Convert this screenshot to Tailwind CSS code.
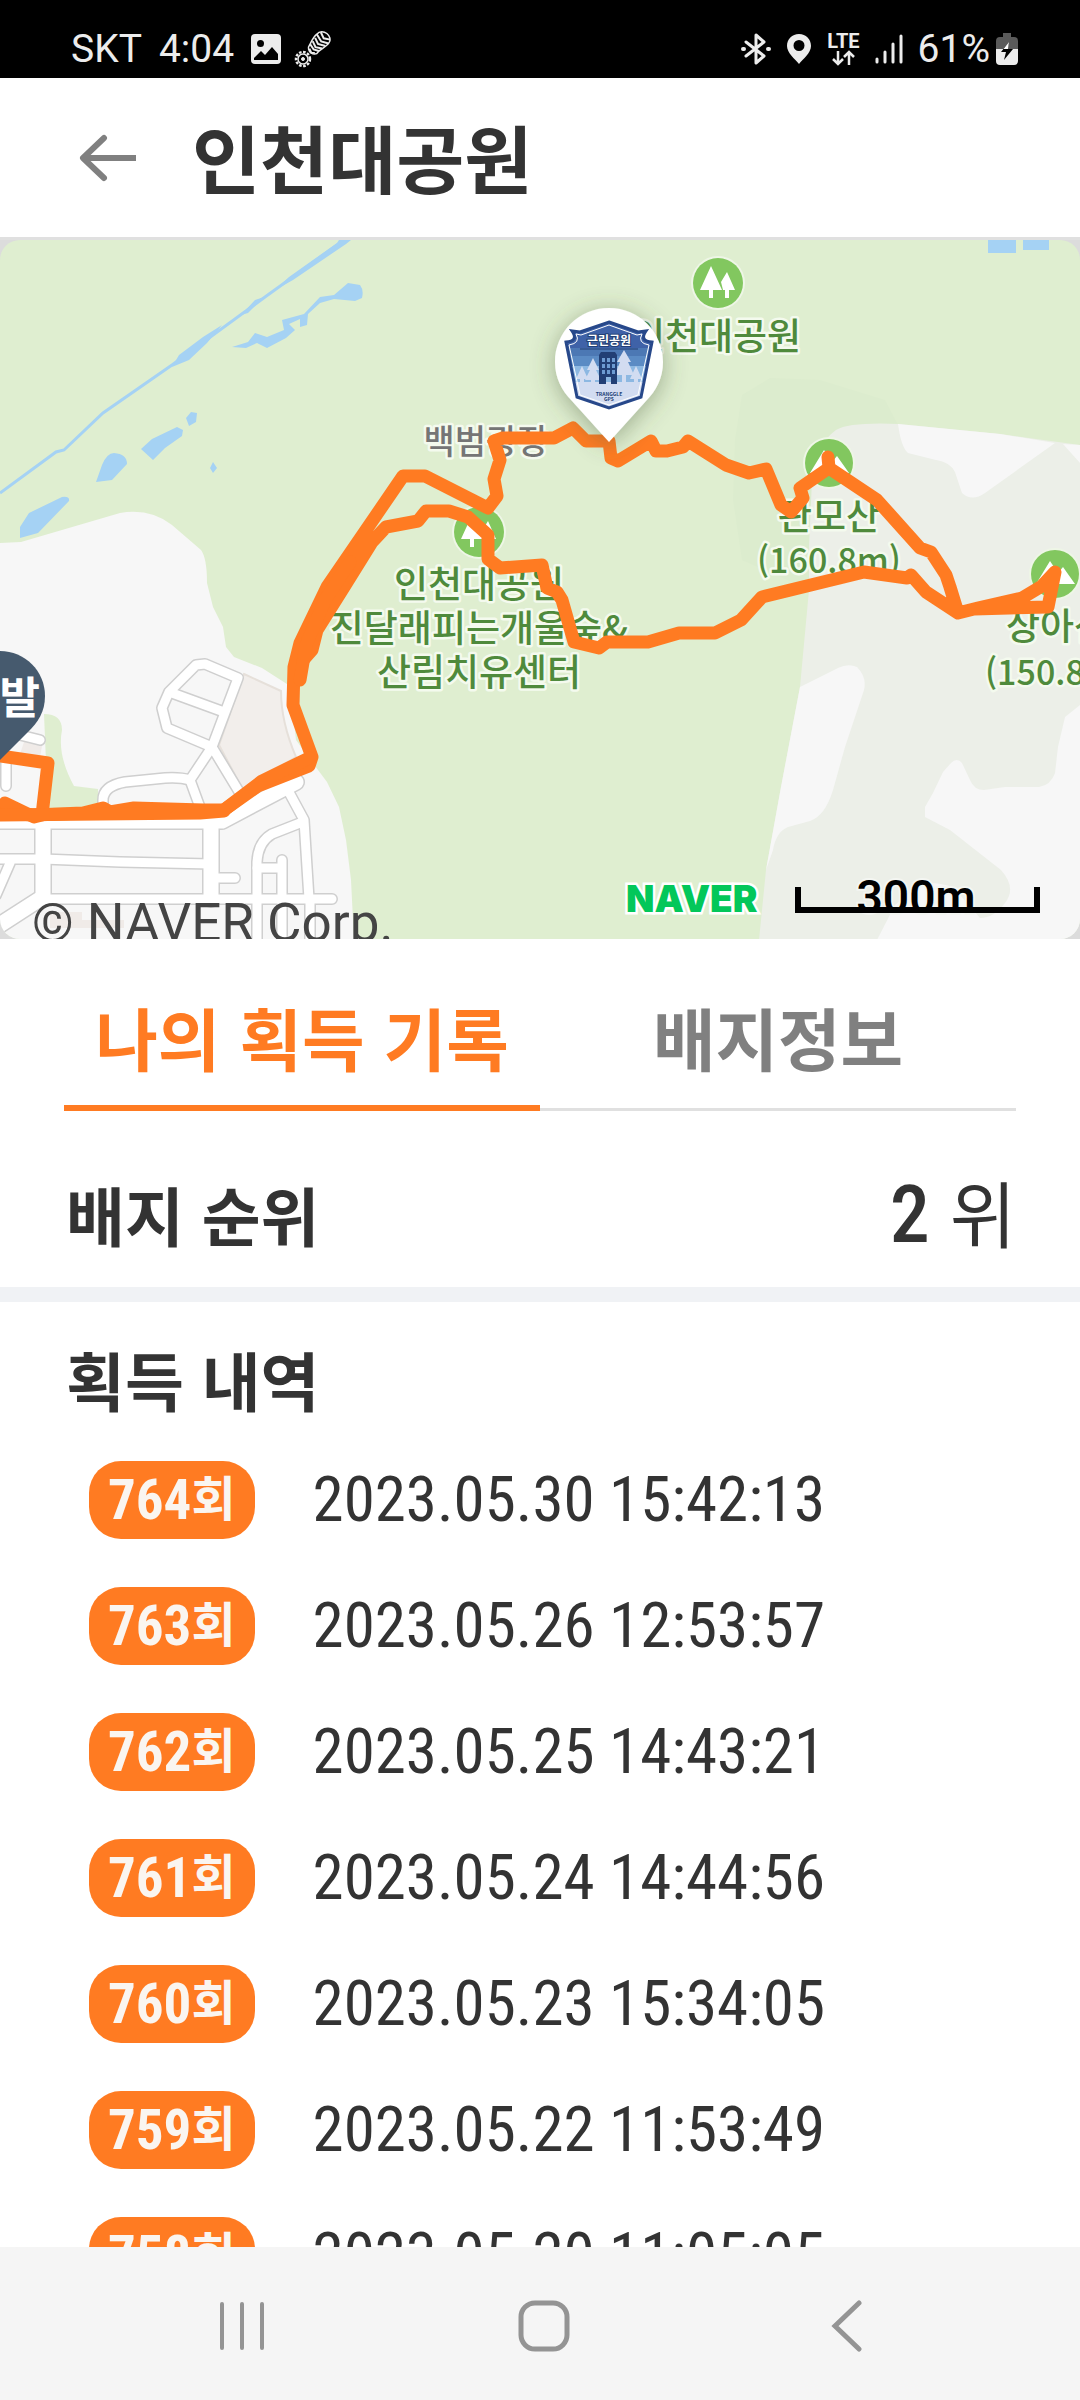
<!DOCTYPE html>
<html lang="ko">
<head>
  <meta charset="UTF-8" />
  <meta name="viewport" content="width=device-width, initial-scale=1.0" />
  <title>인천대공원</title>
  <script src="https://cdn.jsdelivr.net/npm/@tailwindcss/browser@4"></script>
</head>
<body class="h-screen flex flex-col overflow-hidden bg-white text-[#333333] font-['Noto_Sans_CJK_KR',sans-serif]">

  <!-- Status bar -->
  <div class="h-[78px] shrink-0 bg-black text-[#ececec] flex items-center justify-between pt-5 pl-[71px] pr-[62px] font-['Roboto',sans-serif] text-[39px]">
    <div class="flex items-center gap-[17px]">
      <span>SKT</span>
      <span>4:04</span>
      <svg class="size-[30px]" viewBox="0 0 30 30">
        <rect width="30" height="30" rx="4" fill="#ececec" />
        <circle cx="9.500" cy="9.500" r="3.500" fill="#000" />
        <path d="M3 24 L10 17 L14 21 L21 13 L27 20 V26 H3 Z" fill="#000" />
      </svg>
      <svg class="w-[38px] h-[38px] -ml-1" viewBox="0 0 38 38" fill="none" stroke="#ececec">
        <circle cx="9" cy="29" r="7" stroke-width="2.500" stroke-dasharray="2.600 1.500" />
        <circle cx="9" cy="29" r="5" stroke-width="1.500" />
        <circle cx="9" cy="29" r="1.500" fill="#ececec" />
        <g transform="rotate(38 24 14)">
          <path d="M17 7 C17 -2 32 -2 32 7 C32 13 29 16 29 20 C30 27 18 27 18 20 C17 15 16 11 17 7 Z" stroke-width="1.500" />
          <path d="M19 3 L25 6 L31 3 M17 7 L25 10 L32 7 M18 11 L24 14 L31 11 M18 15 L24 18 L30 15 M18 19 L24 21 L29 19 M20 23 L24 25 L27 23" stroke-width="2" />
        </g>
      </svg>
    </div>
    <div class="flex items-center gap-[15px]">
      <svg class="w-[30px] h-8" viewBox="0 0 30 32" fill="none" stroke="#ececec" stroke-width="3" stroke-linejoin="round" stroke-linecap="round">
        <path d="M5 9 L23 23 L15 30 V2 L23 9 L5 23" />
        <path d="M2 16 h1 M27 16 h1" stroke-width="4" />
      </svg>
      <svg class="w-[26px] h-8" viewBox="0 0 26 32">
        <path fill="#ececec" fill-rule="evenodd" d="M13 1 C6 1 1 6 1 13 C1 20 9 26 13 31 C17 26 25 20 25 13 C25 6 20 1 13 1 Z M13 7 a5.500 5.500 0 1 1 0 11 a5.500 5.500 0 1 1 0 -11 Z" />
      </svg>
      <div class="flex flex-col items-center">
        <span class="text-[20px] leading-[18px] font-bold">LTE</span>
        <svg class="w-6 h-4" viewBox="0 0 24 16" fill="none" stroke="#ececec" stroke-width="2.500">
          <path d="M7 1 V14 M2 9 L7 14 L12 9 M18 15 V2 M13 7 L18 2 L23 7" />
        </svg>
      </div>
      <svg class="w-7 h-8" viewBox="0 0 28 32" stroke="#ececec" stroke-width="3" stroke-linecap="round">
        <path d="M2 26 V29 M10 19 V29 M18 11 V29 M26 3 V29" />
      </svg>
      <div class="flex items-center gap-[6px]">
        <span>61%</span>
        <svg class="w-[22px] h-8" viewBox="0 0 22 32">
          <path d="M7 0 H15 V4 H18 Q22 4 22 8 V18 H0 V8 Q0 4 4 4 H7 Z" fill="#5a5a5a" />
          <path d="M0 16 H22 V28 Q22 32 18 32 H4 Q0 32 0 28 Z" fill="#ececec" />
          <path d="M13 9 L5 19 H10 L8 27 L17 16 H12 Z" fill="#000" />
          <path d="M13 9 L7.500 16 H12 Z" fill="#fff" />
        </svg>
      </div>
    </div>
  </div>

  <!-- Title bar -->
  <header class="h-[162px] shrink-0 border-b-3 border-[#e0e0e0] flex items-center gap-[54px] pl-[78px]">
    <button aria-label="뒤로">
      <svg class="w-[60px] h-12" viewBox="0 0 60 48" fill="none" stroke="#808080" stroke-width="6" stroke-linecap="round" stroke-linejoin="round">
        <path d="M26 4 L5 24 L26 44" />
        <path d="M6 24 H58" stroke-linecap="butt" />
      </svg>
    </button>
    <h1 class="pb-1 text-[74px] leading-[96px] font-semibold">인천대공원</h1>
  </header>

  <!-- Map -->
  <div class="h-[699px] shrink-0 bg-[#dcdcdc]">
    <svg class="w-full h-full" viewBox="0 240 1080 699" preserveAspectRatio="xMidYMid slice">
      <defs>
        <clipPath id="mapClip"><rect x="0" y="240" width="1080" height="699" rx="20" /></clipPath>
        <filter id="pinShadow" x="-50%" y="-50%" width="200%" height="200%">
          <feDropShadow dx="0" dy="4" stdDeviation="12" flood-color="#4b5b3c" flood-opacity="0.450" />
        </filter>
        <g id="roadsNarrow">
          <path d="M205 664 L238 678 L212 747 L167 728 L162 708 L169 692 L196 665 Z" />
          <path d="M172 693 L224 712 M212 747 L190 780 L201 810 M212 747 L241 795" />
          <path d="M190 780 Q180 777 165 778 L125 782 Q103 786 103 800 V812" />
          <path d="M284 783 L304 820 L309 899 M300 823 L272 834 Q258 842 257 862 V945" />
          <path d="M257 868 H282 M282 860 V945 M310 899 V945 M213 878 H235" />
          <path d="M50 899 L332 899 M0 859 H43 L120 862 L211 864" />
          <path d="M20 735 L40 740 M6 760 V786 M10 863 L-4 895" />
        </g>
        <g id="roadsWide">
          <path d="M-5 821 L222 821 L296 782" />
          <path d="M43 821 V899 M211 821 V899 M-5 928 L43 897" />
        </g>
        <g id="peak">
          <circle r="26" fill="#eef6e6" />
          <circle r="24" fill="#82c75f" />
          <path d="M-19 10 L-5 -13 L3 -1 L8 -7 L20 10 Z" fill="#fff" />
        </g>
        <g id="trees">
          <circle r="27" fill="#eef6e6" />
          <circle r="25" fill="#82c75f" />
          <path d="M-7 -17 L4 7 H-5 V15 H-9 V7 H-18 Z" fill="#fff" />
          <path d="M9 -11 L17 7 H11 V15 H7 V7 H5 L3 -1 Z" fill="#fff" />
        </g>
      </defs>

      <g clip-path="url(#mapClip)">
        <rect y="240" width="1080" height="700" fill="#dfeed0" />

        <!-- Built-up and mountain areas -->
        <path fill="#dcecce" d="M742 560 L733 500 L735 440 L742 395 L770 378 L820 380 L885 400 L898 425 L850 440 L810 590 Z" />
        <path fill="#f7f7f7" d="M0 543 L21 542 L120 513 Q150 508 172 525 L201 550 Q207 558 207 583 L213 607 L223 627 L226 647 L234 657 L262 668 L290 686 L296 740 L312 762 L327 782 L339 807 L346 840 L351 880 L354 940 H0 Z" />
        <path fill="#dfeed0" d="M44 714 Q62 714 62 730 Q57 755 74 786 L98 789 V810 H48 Z" />
        <path fill="#ecefe8" d="M809 590 V547 L812 480 Q815 445 836 430 Q850 422 898 424 L1000 434 L1080 445 V940 H759 L766 870 L781 787 L800 687 Z" />
        <path fill="#f7f7f7" d="M898 424 L1000 434 L1055 443 L985 493 Q972 502 962 493 L955 472 Q950 462 936 460 L908 453 Q901 447 898 424 Z M1063 444 L1080 445 V463 Z" />
        <path fill="#f7f7f7" d="M800 687 L838 668 Q848 663 857 667 Q867 677 864 690 L845 747 L833 790 Q825 816 810 821 L788 827 Q776 832 773 850 L766 870 L781 787 Z" />
        <path fill="#f7f7f7" d="M1080 705 L1065 717 L1058 747 L1055 773 Q1051 785 1039 787 H1005 L984 790 Q974 790 970 780 L962 763 Q957 757 951 763 L943 772 L933 793 L925 807 V817 L950 830 L1001 870 Q1017 888 1005 903 Q994 918 980 918 L953 887 Q930 880 919 885 L895 905 L877 940 H1080 Z" />
        <path fill="#f2eeeb" stroke="#e6e0da" stroke-width="2" d="M244 674 L281 691 Q281 722 296 757 L258 780 L243 790 L219 745 Z" />
        <path fill="#f0ebe8" d="M24 742 L42 746 L40 757 L20 754 Z M50 912 H82 V920 H124 V928 H50 Z" />

        <!-- Water -->
        <g fill="#a5d2f4">
          <path d="M0 493 L56 452 L64 450 L103 413 L172 365 L265 297 L344 240" fill="none" stroke="#a5d2f4" stroke-width="3" />
          <path d="M172 367 L179 355 L203 337 L222 325 L207 343 L189 360 Z M241 315 L255 300 L264 297 L248 313 Z M275 290 L289 277 L337 243 L339 240 H351 L346 244 L293 280 Z" />
          <path d="M232 347 L248 342 L255 333 L267 337 L284 330 L282 320 L304 314 L320 297 L334 295 L348 283 L360 285 Q364 290 362 298 L355 301 L334 299 L320 303 L308 314 L307 325 L300 327 V319 L289 324 L295 330 L286 338 L267 348 L257 343 L246 348 Z" />
          <path d="M186 418 L191 412 L197 413 L196 422 L189 426 Z M141 449 L152 439 L177 427 L183 430 L182 436 L165 448 L153 460 Z" />
          <path d="M96 482 L102 465 Q107 453 114 453 Q127 454 127 464 L112 480 Z M20 538 V527 L29 513 L62 497 Q70 496 69 501 L38 533 Z M213 462 L217 468 L213 473 L210 468 Z" />
          <path d="M988 240 H1016 V253 H988 Z M1023 240 H1049 V250 H1023 Z" />
        </g>

        <!-- Roads: casing below, surface above -->
        <g fill="none" stroke="#cfcfcf" stroke-linejoin="round" stroke-linecap="round">
          <use href="#roadsNarrow" stroke-width="12" />
          <use href="#roadsWide" stroke-width="18" />
        </g>
        <g fill="none" stroke="#ffffff" stroke-linejoin="round" stroke-linecap="round">
          <use href="#roadsNarrow" stroke-width="9" />
          <use href="#roadsWide" stroke-width="15" />
        </g>

        <!-- Places -->
        <use href="#trees" x="718" y="283" />
        <use href="#trees" x="479" y="532" />
        <use href="#peak" x="829" y="463" />
        <use href="#peak" x="1055" y="574" />
        <g class="text-[37px] font-medium" fill="#4f8a3c" stroke="#f4faee" stroke-width="5" stroke-linejoin="round" paint-order="stroke" text-anchor="middle">
          <text x="716" y="350">인천대공원</text>
          <text x="479" y="598">인천대공원</text>
          <text x="479" y="642">진달래피는개울숲&amp;</text>
          <text x="479" y="686">산림치유센터</text>
          <text x="829" y="530">관모산</text>
          <text x="829" y="573" class="text-[34px]">(160.8m)</text>
          <text x="1057" y="640">상아산</text>
          <text x="1057" y="685" class="text-[34px]">(150.8m)</text>
          <text x="486" y="454" class="text-[34px]" fill="#757575">백범광장</text>
        </g>

        <!-- Walked route -->
        <g fill="none" stroke="#ff7b22" stroke-width="13" stroke-linejoin="round" stroke-linecap="round">
          <path d="M0 813 L34 815 L83 813 L103 808 L110 812 L134 808 L203 810 L224 810 L258 786 L309 766 L312 757 L293 705 L294 667 L300 643 L327 587 L403 476 H425 L488 508 L497 496 L494 479 L500 460 L494 441 L503 438 H554 L573 428 L586 441 H609 L611 458 L618 461 L651 441 L656 451 H667 L683 447 L688 441 L726 465 L749 473 L766 469 L781 505 L791 512 L803 498 L800 488 L829 468 L828 457 L829 468 L877 500 L920 548 L931 552 L946 575 L950 587 L958 613 L978 608 L1022 598 L1042 586 L1055 572 L1048 607 L974 609 L958 613 L926 592 L911 575 L907 578 L864 572 L762 597 L741 620 L715 633 H679 L648 642 H607 L599 648 L574 642 L562 600 L557 592 L547 588 L542 565 L500 568 L488 559 V535 L468 517 L449 511 H426 L418 521 L386 527 L372 542 L344 587 L317 630 L312 650 L297 667" />
          <path d="M300 680 L306 645 L325 600 L350 562 M224 810 L262 781 L309 758 M0 756 L48 763 L42 815 L34 817 L5 803" />
          <path d="M0 815 L200 813 L224 811" />
        </g>

        <!-- Start pin -->
        <path d="M0 651 C25 651 45 671 45 696 C45 712 38 722 28 732 L0 760 L-28 732 C-38 722 -45 712 -45 696 C-45 671 -25 651 0 651 Z" fill="#465a6e" />
        <text x="40" y="714" text-anchor="end" class="text-[44px] font-bold" fill="#fff">출발</text>

        <!-- Badge pin -->
        <path filter="url(#pinShadow)" fill="#fff" d="M609 308 C639 308 663 332 663 362 C663 378 656 391 646 401 L609 442 L572 401 C562 391 555 378 555 362 C555 332 579 308 609 308 Z" />
        <clipPath id="badgeClip"><path d="M609 322 L638 332 L646 331 Q639 341 652 342 L641 397 L609 408 L577 397 L566 342 Q579 341 572 331 L580 332 Z" /></clipPath>
        <g clip-path="url(#badgeClip)">
          <rect x="560" y="320" width="100" height="90" fill="#3f62a8" />
          <rect x="560" y="348" width="100" height="12" fill="#4c78b4" />
          <rect x="560" y="356" width="100" height="12" fill="#5b8bc4" />
          <rect x="560" y="366" width="100" height="18" fill="#8db8e2" />
          <rect x="560" y="382" width="100" height="28" fill="#d2dcf1" />
          <path fill="#d2dcf1" d="M593 358 L599 370 H596 L601 380 H595 V383 H591 V380 H585 L590 370 H587 Z M624 350 L631 362 H628 L634 375 H626 V383 H622 V375 H615 L620 362 H617 Z M582 366 L588 379 H584 V383 H580 V379 H576 Z M636 366 L642 379 H638 V383 H634 V379 H630 Z" />
          <path fill="#223f75" d="M601 352 H615 L617 355 V384 H611 V377 H606 V384 H599 V355 Z" />
          <path fill="#6d9bd2" d="M602 358 h3 v4 h-3 Z M607 358 h3 v4 h-3 Z M612 358 h3 v4 h-3 Z M602 364 h3 v4 h-3 Z M607 364 h3 v4 h-3 Z M612 364 h3 v4 h-3 Z M602 370 h3 v4 h-3 Z M607 370 h3 v4 h-3 Z M612 370 h3 v4 h-3 Z" />
        </g>
        <path fill="none" stroke="#27488a" stroke-width="3" d="M609 322 L638 332 L646 331 Q639 341 652 342 L641 397 L609 408 L577 397 L566 342 Q579 341 572 331 L580 332 Z" />
        <path fill="none" stroke="#fff" d="M609 325 L637 335 L642 334 Q637 343 649 345 L638 395 L609 405 L580 395 L569 345 Q581 343 576 334 L581 335 Z" />
        <path stroke="#223f75" d="M580 349 H638" />
        <g text-anchor="middle" class="font-bold">
          <text x="609" y="345" class="text-[12px]" fill="#fff" stroke="#223f75" stroke-width="2" paint-order="stroke">근린공원</text>
          <text x="609" y="396" class="text-[5px]" fill="#223f75">TRANGGLE</text>
          <text x="609" y="401" class="text-[5px]" fill="#223f75">GPS</text>
        </g>

        <!-- Scale and credits -->
        <text x="626" y="912" class="font-['Inter',sans-serif] font-black text-[37px]" fill="#03c75a" stroke="#fff" stroke-width="5" paint-order="stroke">NAVER</text>
        <text x="916" y="913" text-anchor="middle" class="font-['Roboto',sans-serif] font-semibold text-[46px]" fill="#000" stroke="#f4f6f2" stroke-width="4" paint-order="stroke">300m</text>
        <path d="M798 887 V910 H1037 V887" fill="none" stroke="#000" stroke-width="6" />
      </g>
      <text x="32" y="941" class="font-['Roboto',sans-serif] text-[53px]" fill="#444">© NAVER Corp.</text>
    </svg>
  </div>

  <!-- Tabs -->
  <div role="tablist" class="grid grid-cols-2 items-end shrink-0 mx-16 pt-[38px] text-[68px] leading-[96px] font-semibold">
    <button role="tab" aria-selected="true" class="h-[134px] pb-2 border-b-6 border-[#ff7b22] text-[#ff7b22]">나의 획득 기록</button>
    <button role="tab" aria-selected="false" class="h-[134px] pb-3 border-b-3 border-[#e0e0e0] text-[#808080]">배지정보</button>
  </div>

  <!-- Rank -->
  <section class="h-[191px] shrink-0 border-b-15 border-[#f0f2f5] flex items-center justify-between pt-7 pl-[66px] pr-16">
    <h2 class="text-[64px] leading-[96px] font-semibold">배지 순위</h2>
    <p class="flex items-baseline gap-5 leading-[96px]">
      <span class="font-['Roboto_Condensed',sans-serif] font-medium text-[80px]">2</span>
      <span class="text-[72px]">위</span>
    </p>
  </section>

  <!-- History -->
  <section class="flex-1 min-h-0 overflow-hidden pt-7">
    <h2 class="pl-[66px] text-[64px] leading-[96px] font-semibold">획득 내역</h2>
    <ul id="history" class="mt-[35px] pl-[89px] flex flex-col gap-12"></ul>
  </section>

  <!-- Navigation bar -->
  <nav class="h-[153px] shrink-0 bg-[#f5f5f5] grid grid-cols-3 items-center justify-items-center pt-1 pl-[91px] pr-[82px]">
    <button aria-label="최근 앱">
      <svg class="size-[52px]" viewBox="0 0 52 52" stroke="#949494" stroke-width="4" stroke-linecap="round"><path d="M6 4 V48 M26 4 V48 M46 4 V48" /></svg>
    </button>
    <button aria-label="홈">
      <svg class="size-[52px]" viewBox="0 0 52 52" fill="none" stroke="#949494" stroke-width="5"><rect x="3" y="3" width="46" height="46" rx="14" /></svg>
    </button>
    <button aria-label="뒤로 가기">
      <svg class="size-[52px]" viewBox="0 0 52 52" fill="none" stroke="#949494" stroke-width="5" stroke-linecap="round"><path d="M38 3 L14 26 L38 49" /></svg>
    </button>
  </nav>

  <script>
    const records = [
      [764, '2023.05.30 15:42:13'],
      [763, '2023.05.26 12:53:57'],
      [762, '2023.05.25 14:43:21'],
      [761, '2023.05.24 14:44:56'],
      [760, '2023.05.23 15:34:05'],
      [759, '2023.05.22 11:53:49'],
      [758, '2023.05.20 11:05:05'],
    ];

    document.getElementById('history').innerHTML = records.map(([count, date]) => `
      <li class="flex items-center gap-[58px] h-[78px] font-['Roboto_Condensed','Noto_Sans_CJK_KR',sans-serif]">
        <span class="h-[78px] px-[19px] flex items-center rounded-[32px] bg-[#ff7b22] text-[#faf5f0] font-bold">
          <span class="text-[55px] leading-[78px]">${count}</span><span class="text-[48px] leading-[78px]">회</span>
        </span>
        <time class="text-[63px] leading-[78px]">${date}</time>
      </li>`).join('');
  </script>
</body>
</html>
